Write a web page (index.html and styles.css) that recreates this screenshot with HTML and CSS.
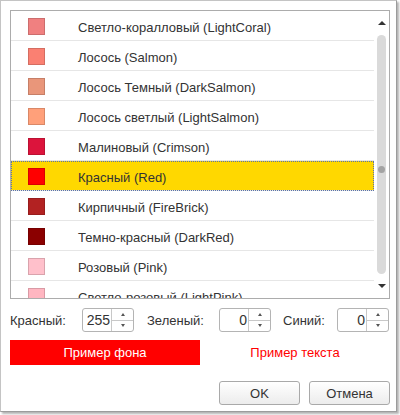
FILE: index.html
```html
<!DOCTYPE html>
<html lang="ru">

<head>
  <meta charset="UTF-8">
  <meta name="viewport" content="width=device-width, initial-scale=1.0">
  <title>Выбор цвета</title>
  <link rel="stylesheet" href="styles.css">
</head>

<body>

  <div class="window">
    <div class="color-list">
      <div class="rows">
        <div class="row"><span class="swatch" style="background-color: #F08080;"></span>Светло-коралловый (LightCoral)</div>
        <div class="row"><span class="swatch" style="background-color: #FA8072;"></span>Лосось (Salmon)</div>
        <div class="row"><span class="swatch" style="background-color: #E9967A;"></span>Лосось Темный (DarkSalmon)</div>
        <div class="row"><span class="swatch" style="background-color: #FFA07A;"></span>Лосось светлый (LightSalmon)</div>
        <div class="row"><span class="swatch" style="background-color: #DC143C;"></span>Малиновый (Crimson)</div>
        <div class="row selected"><span class="swatch" style="background-color: #FF0000;"></span>Красный (Red)</div>
        <div class="row"><span class="swatch" style="background-color: #B22222;"></span>Кирпичный (FireBrick)</div>
        <div class="row"><span class="swatch" style="background-color: #8B0000;"></span>Темно-красный (DarkRed)</div>
        <div class="row"><span class="swatch" style="background-color: #FFC0CB;"></span>Розовый (Pink)</div>
        <div class="row"><span class="swatch" style="background-color: #FFB6C1;"></span>Светло-розовый (LightPink)</div>
      </div>
      <div class="scrollbar">
        <div class="arrow-up"></div>
        <div class="track">
          <div class="thumb"></div>
        </div>
        <div class="arrow-down"></div>
      </div>
    </div>

    <div class="rgb-row">
      <label class="rgb-label first">Красный:</label>
      <div class="spin">
        <div class="spin-value">255</div>
        <div class="spin-buttons">
          <div class="spin-btn"><span class="tri-up"></span></div>
          <div class="spin-btn"><span class="tri-down"></span></div>
        </div>
      </div>
      <label class="rgb-label">Зеленый:</label>
      <div class="spin">
        <div class="spin-value">0</div>
        <div class="spin-buttons">
          <div class="spin-btn"><span class="tri-up"></span></div>
          <div class="spin-btn"><span class="tri-down"></span></div>
        </div>
      </div>
      <label class="rgb-label short">Синий:</label>
      <div class="spin">
        <div class="spin-value">0</div>
        <div class="spin-buttons">
          <div class="spin-btn"><span class="tri-up"></span></div>
          <div class="spin-btn"><span class="tri-down"></span></div>
        </div>
      </div>
    </div>

    <div class="sample-row">
      <div class="sample-bg">Пример фона</div>
      <div class="sample-text">Пример текста</div>
    </div>

    <div class="buttons">
      <button class="btn">OK</button>
      <button class="btn">Отмена</button>
    </div>
  </div>

</body>

</html>
```

FILE: styles.css
```css
body,
html {
  margin: 0;
  height: 100%;
  font-family: "Liberation Sans", Arial, sans-serif;
  font-size: 13px;
  color: #333;
  background-color: #fff;
}

.window {
  box-sizing: border-box;
  width: 397px;
  height: 412px;
  padding: 9px 6px 0 9px;
  background-color: #fff;
  border-left: 1px solid #c4c4c4;
  border-top: 1px solid #c4c4c4;
  border-right: 1px solid #9c9c9c;
  border-bottom: 1px solid #9c9c9c;
  box-shadow: 2px 2px 2px rgba(0, 0, 0, 0.3);
}

/* список цветов */
.color-list {
  box-sizing: border-box;
  width: 380px;
  height: 289px;
  border: 1px solid #acacac;
  display: flex;
}

.rows {
  flex: 1;
  overflow: hidden;
}

.row {
  box-sizing: border-box;
  height: 30px;
  padding-top: 3px;
  display: flex;
  align-items: center;
  border-bottom: 1px solid #e6e6e6;
  white-space: nowrap;
}

.row.selected {
  background-color: #ffd800;
  outline: 1px dotted #5a72a8;
  outline-offset: -1px;
}

.swatch {
  box-sizing: border-box;
  width: 17px;
  height: 17px;
  margin-top: -2px;
  margin-left: 17px;
  margin-right: 33px;
  border: 1px solid rgba(0, 0, 0, 0.15);
  flex-shrink: 0;
}

.scrollbar {
  width: 15px;
  display: flex;
  flex-direction: column;
  align-items: center;
  padding-top: 10px;
}

.arrow-up {
  width: 0;
  height: 0;
  border-left: 4px solid transparent;
  border-right: 4px solid transparent;
  border-bottom: 4px solid #333;
}

.arrow-down {
  width: 0;
  height: 0;
  border-left: 4px solid transparent;
  border-right: 4px solid transparent;
  border-top: 4px solid #333;
  margin-top: 10px;
}

.track {
  width: 9px;
  height: 239px;
  margin-top: 10px;
  border-radius: 5px;
  background-color: #dadada;
  display: flex;
  flex-direction: column;
  align-items: center;
}

.thumb {
  width: 7px;
  height: 7px;
  margin-top: 131px;
  border-radius: 50%;
  background-color: #a3a3a3;
}

/* поля RGB */
.rgb-row {
  display: flex;
  align-items: center;
  margin-top: 9px;
}

.rgb-label {
  width: 72px;
  margin-left: 13px;
}

.rgb-label.first {
  margin-left: 0;
}

.rgb-label.short {
  width: 54px;
  margin-left: 12px;
}

.spin {
  box-sizing: border-box;
  width: 52px;
  height: 24px;
  border: 1px solid #b4b4b4;
  border-radius: 3px;
  display: flex;
}

.spin-value {
  flex: 1;
  text-align: right;
  line-height: 22px;
  font-size: 14px;
  padding-right: 1px;
}

.spin-buttons {
  width: 21px;
  border-left: 1px solid #c8c8c8;
  display: flex;
  flex-direction: column;
}

.spin-btn {
  flex: 1;
  display: flex;
  align-items: center;
  justify-content: center;
}

.spin-btn + .spin-btn {
  border-top: 1px solid #c8c8c8;
}

.tri-up {
  width: 0;
  height: 0;
  border-left: 2px solid transparent;
  border-right: 2px solid transparent;
  border-bottom: 3px solid #555;
}

.tri-down {
  width: 0;
  height: 0;
  border-left: 2px solid transparent;
  border-right: 2px solid transparent;
  border-top: 3px solid #555;
}

/* образец */
.sample-row {
  display: flex;
  margin-top: 8px;
}

.sample-bg {
  width: 190px;
  height: 25px;
  line-height: 25px;
  text-align: center;
  background-color: #ff0000;
  color: #fff;
}

.sample-text {
  width: 190px;
  line-height: 25px;
  text-align: center;
  color: #ff0000;
}

/* кнопки */
.buttons {
  display: flex;
  justify-content: flex-end;
  gap: 9px;
  margin-top: 16px;
}

.btn {
  box-sizing: border-box;
  width: 81px;
  height: 24px;
  font-family: "Liberation Sans", Arial, sans-serif;
  font-size: 13px;
  color: #333;
  border: 1px solid #a9a9a9;
  border-radius: 3px;
  background: linear-gradient(#ffffff, #ececec);
  padding: 0;
}
```
